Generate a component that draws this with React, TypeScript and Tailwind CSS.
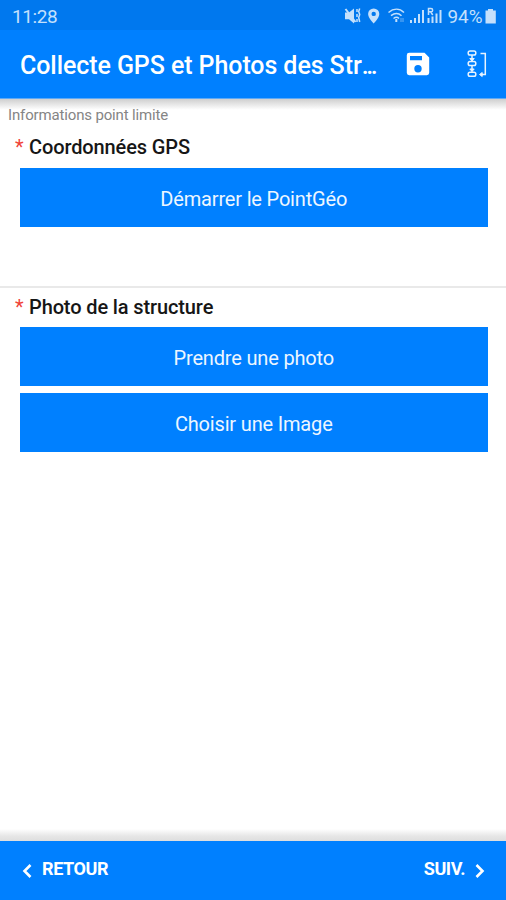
import type { ReactNode } from 'react';

function StatusIcons() {
  return (
    <svg width="162" height="30" viewBox="344 0 162 30" fill="none" className="shrink-0" aria-hidden="true">
      <g fill="#c4e0fc">
        <path d="M345 12.500h4l5-4v15l-5-4.300h-4z" />
        <path d="M373.700 8.400a5.600 5.600 0 0 0-5.600 5.600c0 4 5.600 9.400 5.600 9.400s5.600-5.400 5.600-9.400a5.600 5.600 0 0 0-5.600-5.600zm0 7.700a2.200 2.200 0 1 1 0-4.400 2.200 2.200 0 0 1 0 4.400z" />
        <path d="M410 20h2v3h-2zM414 18h2v5h-2zM418 14h2v9h-2zM422 10h2v13h-2z" />
        <path d="M427.500 18h2v5h-2zM431.500 16.500h2v6.500h-2zM435.500 13.500h2v9.500h-2zM439.500 10h2v13h-2z" />
        <path d="M488 9h5v1.500h2.800v13h-10.300v-13h2.500z" />
      </g>
      <g stroke="#c4e0fc" strokeWidth="1.500">
        <path d="M345.500 9l10 13" strokeWidth="2" />
        <path d="M357 9v3m0 2v3m0 2v3M359.700 8.500l-1 3 1 3-1 3 1 4.500" />
        <path d="M388.500 12.500c5-4.200 11-4.200 15.500 0M391 15.700c3.500-2.800 7.500-2.800 10.500 0M393.500 18.500c2-1.500 4-1.500 5.500 0" />
        <path d="M396.300 19v3" strokeWidth="2" />
        <path d="M401 18v4m2-4v4" strokeWidth="1" opacity=".55" />
        <path d="M428.500 15V8.500h2.500a1.600 1.600 0 0 1 0 3.300h-2.500m2.200 0l2 3.200" strokeWidth="1.500" />
      </g>
      <text x="447.500" y="23" fill="#c4e0fc" fontSize="19" fontFamily="Roboto, sans-serif" textLength="35" lengthAdjust="spacingAndGlyphs">94%</text>
    </svg>
  );
}

function SaveIcon() {
  return (
    <svg width="24" height="24" viewBox="0 0 24 24" fill="#fff" aria-hidden="true">
      <path fillRule="evenodd" d="M3.200.8h15.300l4.700 4.700v15.300a2.400 2.400 0 0 1-2.400 2.400H3.200a2.400 2.400 0 0 1-2.400-2.400V3.200A2.400 2.400 0 0 1 3.200.8zM4 4v4.300h12V4zm8 9a3.700 3.700 0 1 0 0 7.400 3.700 3.700 0 0 0 0-7.400z" />
    </svg>
  );
}

function HierarchyIcon() {
  return (
    <svg width="20" height="30" viewBox="0 0 20 30" fill="none" stroke="#e8f3ff" strokeWidth="1.500" aria-hidden="true">
      <rect x="1.200" y="2" width="7.600" height="4" rx="1.800" />
      <rect x="1.200" y="12.600" width="7.600" height="4" rx="1.800" />
      <rect x="1.200" y="23.200" width="7.600" height="4" rx="1.800" />
      <path d="M5 6v6M5 16.600v6" />
      <path d="M2.800 9.500h4.400L5 12zM2.800 20h4.400L5 22.500z" fill="#e8f3ff" strokeWidth="1" />
      <path d="M13.500 4.500h4.800v21h-4" />
      <path d="M12.500 25.500l2.700-2v4z" fill="#e8f3ff" strokeWidth="1" />
    </svg>
  );
}

function Chevron({ d }: { d: string }) {
  return (
    <svg width="10" height="16" viewBox="0 0 10 16" fill="none" stroke="#fff" strokeWidth="2.600" aria-hidden="true">
      <path d={d} />
    </svg>
  );
}

function Label({ children }: { children: ReactNode }) {
  return (
    <h2 className="flex h-6 items-center pl-[15px] text-[20px] leading-6 font-medium text-[#161616]">
      <span className="w-[14px] font-normal text-[#f04438]">*</span>
      <span className="tracking-[-0.12px]">{children}</span>
    </h2>
  );
}

function ActionButton({ children }: { children: ReactNode }) {
  return (
    <button className="flex h-[59px] w-full items-center justify-center bg-[#0080ff] pt-[2px] text-[20px] leading-6 tracking-[-0.17px] text-[#edf6ff]">
      {children}
    </button>
  );
}

export default function App() {
  return (
    <div className="flex h-[900px] w-[506px] flex-col overflow-hidden bg-white font-['Roboto',sans-serif]">
      <div className="flex h-[30px] shrink-0 items-center justify-between bg-[#0078ee] pl-[12px]">
        <span className="pt-[3px] text-[19px] leading-6 tracking-[-0.4px] text-[#c4e0fc]">11:28</span>
        <StatusIcons />
      </div>
      <header className="flex h-[69px] shrink-0 items-center border-b border-[#5fa9f5] bg-[#0080ff] pl-[20px] text-white">
        <h1 className="w-[386px] pt-[3px] text-[25px] leading-8 font-medium tracking-[-0.080px] whitespace-nowrap">
          Collecte GPS et Photos des Str<span className="tracking-[-2.400px]">...</span>
        </h1>
        <SaveIcon />
        <span className="ml-[37px]"><HierarchyIcon /></span>
      </header>
      <main className="flex grow flex-col">
        <div className="h-[36px] bg-linear-to-b from-[#cfcfcf] via-white via-30% to-white pt-[7px] pl-[8px] text-[15px] leading-[18px] tracking-[-0.15px] text-[#858585]">
          Informations point limite
        </div>
        <section className="h-[153px] border-b-2 border-[#e9e9e9]">
          <Label>Coordonnées GPS</Label>
          <div className="mt-[9px] pr-[18px] pl-[19.500px]">
            <ActionButton>Démarrer le PointGéo</ActionButton>
          </div>
        </section>
        <section className="pt-[7px]">
          <Label>Photo de la structure</Label>
          <div className="mt-[8px] flex flex-col gap-[7px] pr-[18px] pl-[19.500px]">
            <ActionButton>Prendre une photo</ActionButton>
            <ActionButton>Choisir une Image</ActionButton>
          </div>
        </section>
      </main>
      <div className="h-[12px] shrink-0 bg-linear-to-b from-white via-[#e6e6e6] via-60% to-[#dedede]" />
      <footer className="flex h-[59px] shrink-0 items-center justify-between bg-[#0080ff] pr-[21px] pl-[22px] text-[18px] font-bold text-white">
        <button className="flex items-center gap-[10px]">
          <Chevron d="M8.500 2L2.500 8l6 6" />
          <span className="pb-[4px] tracking-[-0.4px]">RETOUR</span>
        </button>
        <button className="flex items-center gap-[10px]">
          <span className="pb-[4px] tracking-[-0.4px]">SUIV.</span>
          <Chevron d="M1.500 2l6 6-6 6" />
        </button>
      </footer>
    </div>
  );
}
